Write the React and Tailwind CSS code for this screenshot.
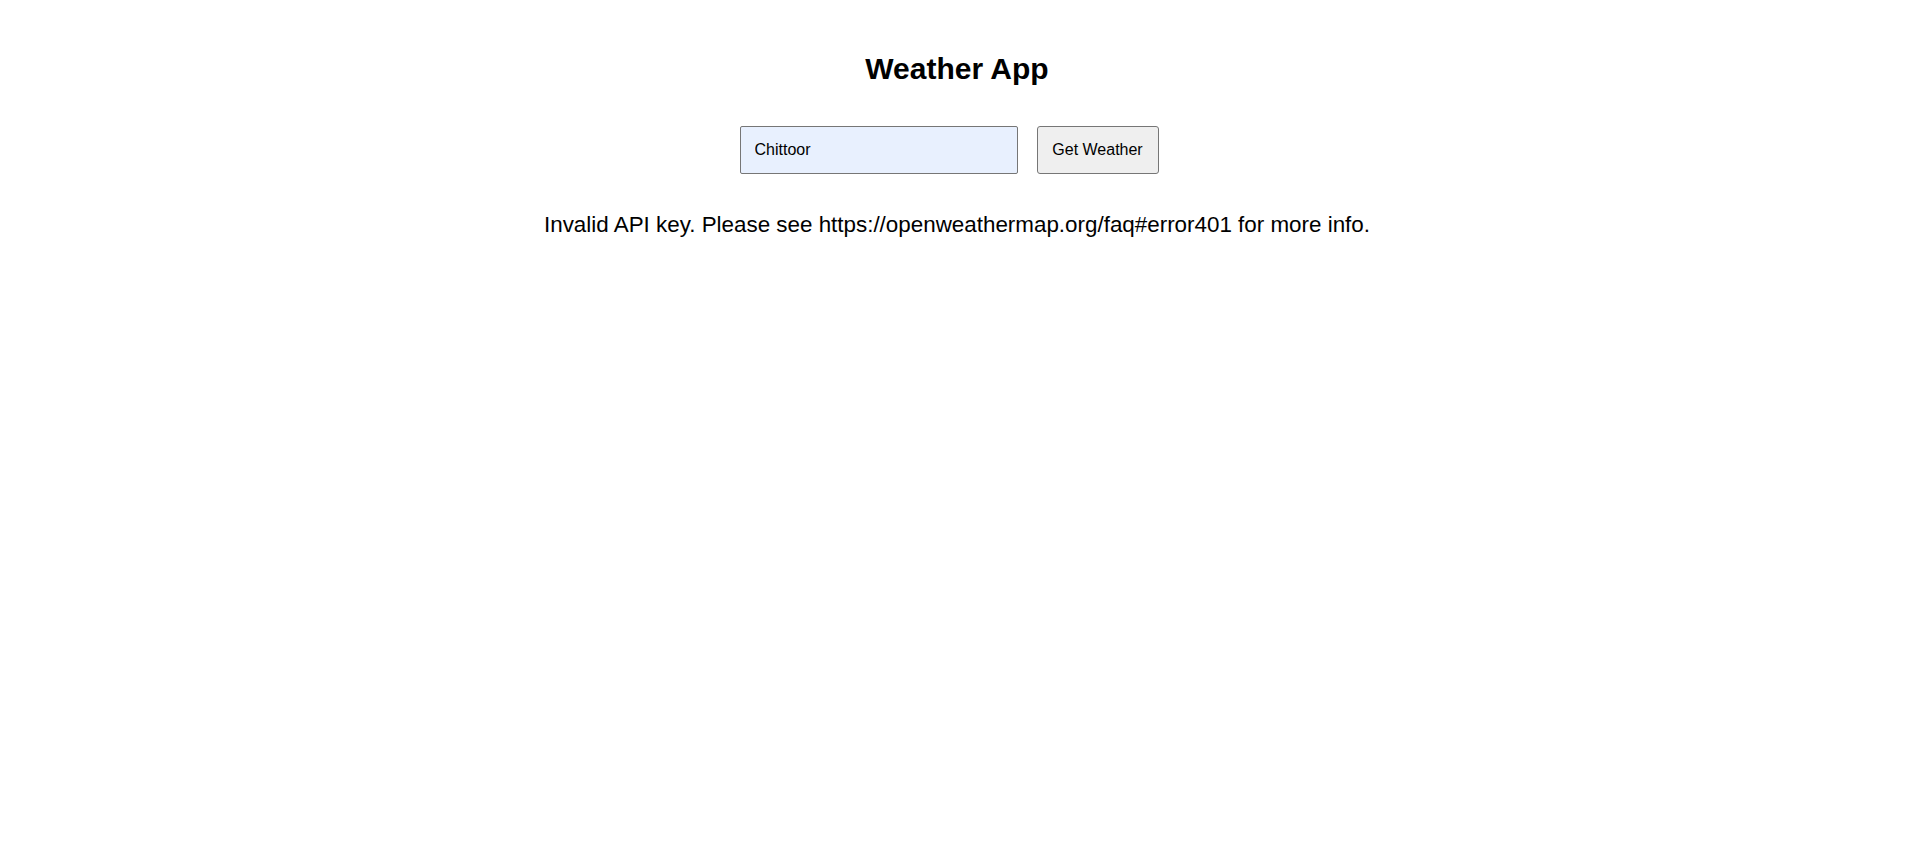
import { useState } from 'react';

export default function App() {
  const [city, setCity] = useState('Chittoor');

  return (
    <div className="min-h-screen bg-white text-black pt-[52px] text-center" style={{ fontFamily: '"Liberation Sans", Arial, sans-serif' }}>
      <h1 className="text-[30px] font-bold leading-[1.15]">Weather App</h1>

      <div className="mt-[39px] flex justify-center">
        <input
          value={city}
          onChange={e => setCity(e.target.value)}
          className="w-[278px] h-[48px] px-[14px] text-[16px] bg-[#e8f0fe] border border-[#767676] rounded-[2px] outline-none"
        />
        <button className="ml-[19px] mr-[16px] w-[122px] h-[48px] text-[16px] bg-[#efefef] border border-[#767676] rounded-[3px]">
          Get Weather
        </button>
      </div>

      <p className="mt-[38px] text-[22.4px] leading-[1.15]">
        Invalid API key. Please see https://openweathermap.org/faq#error401 for more info.
      </p>
    </div>
  );
}
